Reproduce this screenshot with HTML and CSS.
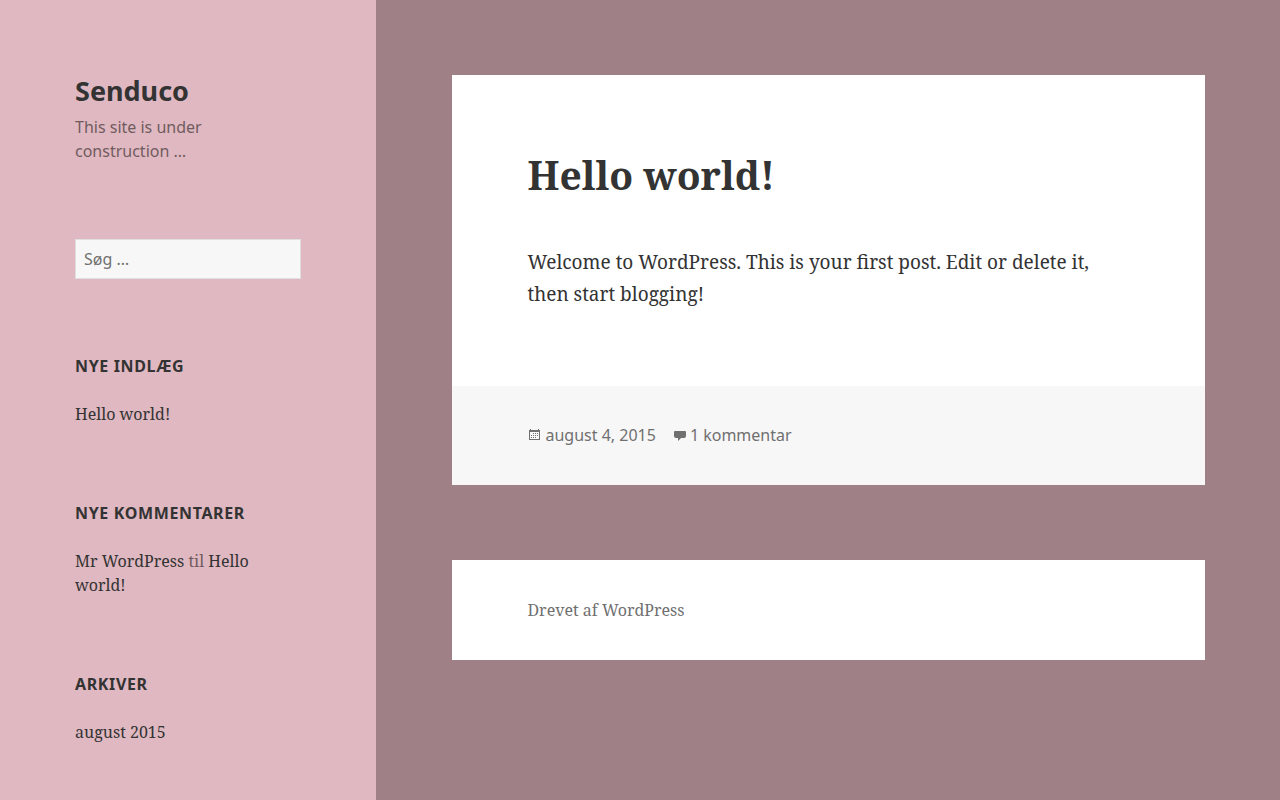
FILE: index.html
```html
<!DOCTYPE html>
<html lang="da">
<head>
<meta charset="utf-8">
<title>Senduco</title>
<link rel="stylesheet" href="styles.css">
</head>
<body>
<div class="site">
  <div class="sidebar">
    <header class="branding">
      <h1 class="site-title"><a href="#">Senduco</a></h1>
      <p class="site-description">This site is under construction …</p>
    </header>
    <aside class="widget">
      <form class="search" role="search">
        <input class="search-field" type="search" placeholder="Søg …" aria-label="Søg efter">
      </form>
    </aside>
    <aside class="widget">
      <h2 class="widget-title">Nye indlæg</h2>
      <ul class="widget-list"><li><a href="#">Hello world!</a></li></ul>
    </aside>
    <aside class="widget">
      <h2 class="widget-title">Nye kommentarer</h2>
      <ul class="widget-list"><li><a href="#">Mr WordPress</a> til <a href="#">Hello world!</a></li></ul>
    </aside>
    <aside class="widget">
      <h2 class="widget-title">Arkiver</h2>
      <ul class="widget-list"><li><a href="#">august 2015</a></li></ul>
    </aside>
  </div>
  <div class="content">
    <main>
      <article class="post">
        <div class="post-body">
          <h2 class="post-title"><a href="#">Hello world!</a></h2>
          <p class="post-text">Welcome to WordPress. This is your first post. Edit or delete it, then start blogging!</p>
        </div>
        <footer class="post-meta">
          <span class="meta-item">
            <svg class="icon" viewBox="0 0 16 16" aria-hidden="true"><path fill="currentColor" fill-rule="evenodd" d="M2 3h1V2h1v1h7V2h1v1h1v10H2zM3 5v7h9V5z"/><path fill="currentColor" d="M6 6h1v1H6zM8 6h1v1H8zM10 6h1v1h-1zM4 8h1v1H4zM6 8h1v1H6zM8 8h1v1H8zM10 8h1v1h-1zM4 10h1v1H4zM6 10h1v1H6zM8 10h1v1H8z"/></svg>
            <a href="#">august 4, 2015</a>
          </span>
          <span class="meta-item">
            <svg class="icon" viewBox="0 0 16 16" aria-hidden="true"><path fill="currentColor" d="M3 4h10a1 1 0 0 1 1 1v4a2 2 0 0 1-2 2H9l-3 3v-3H4a2 2 0 0 1-2-2V5a1 1 0 0 1 1-1z"/></svg>
            <a href="#">1 kommentar</a>
          </span>
        </footer>
      </article>
    </main>
    <footer class="site-footer"><a href="#">Drevet af WordPress</a></footer>
  </div>
</div>
</body>
</html>
```
FILE: styles.css
```css
* {
  box-sizing: border-box;
}

body {
  margin: 0;
  background: #9e8086;
  color: #333;
  font: 16px/24px "Noto Serif", "Liberation Serif", serif;
}

h1, h2, p, ul {
  margin: 0;
  padding: 0;
}

a {
  color: inherit;
  text-decoration: none;
}

.site {
  display: grid;
  grid-template-columns: 5fr 12fr;
  min-height: 100vh;
}

.sidebar {
  padding: 75px 75px 56px;
  background: #e0b8c1;
}

.branding {
  margin-bottom: 76px;
  font-family: "Noto Sans", sans-serif;
}

.site-title {
  margin-bottom: 8px;
  font-size: 27px;
  line-height: 32px;
}

.site-description {
  padding-right: 8px;
  color: #705c60;
}

.widget + .widget {
  margin-top: 75px;
}

.search-field {
  display: block;
  width: 100%;
  height: 40px;
  padding: 0 8px;
  border: 1px solid #dfdfdf;
  border-radius: 0;
  background: #f7f7f7;
  color: #333;
  font: 16px/24px "Noto Sans", sans-serif;
  appearance: none;
}

.search-field::placeholder {
  color: #707070;
  opacity: 1;
}

.widget-title {
  margin-bottom: 24px;
  font: bold 16px/24px "Noto Sans", sans-serif;
  letter-spacing: 0.04em;
  text-transform: uppercase;
}

.widget-list {
  color: #705c60;
  list-style: none;
}

.widget-list a {
  color: #333;
}

.content {
  padding: 75px 75px 75px 76px;
}

.post {
  background: #fff;
}

.post-body {
  padding: 75px 75px 76px;
}

.post-title {
  margin-bottom: 46px;
  font-size: 39px;
  line-height: 50px;
}

.post-text {
  font-size: 19px;
  line-height: 32px;
}

.post-meta {
  display: flex;
  gap: 16px;
  padding: 37px 75px 38px;
  background: #f7f7f7;
  color: #707070;
  font-family: "Noto Sans", sans-serif;
}

.meta-item {
  display: flex;
  align-items: center;
  gap: 2px;
}

.icon {
  width: 16px;
  height: 16px;
}

.site-footer {
  margin-top: 75px;
  padding: 38px 75px;
  background: #fff;
  color: #707070;
}
```
